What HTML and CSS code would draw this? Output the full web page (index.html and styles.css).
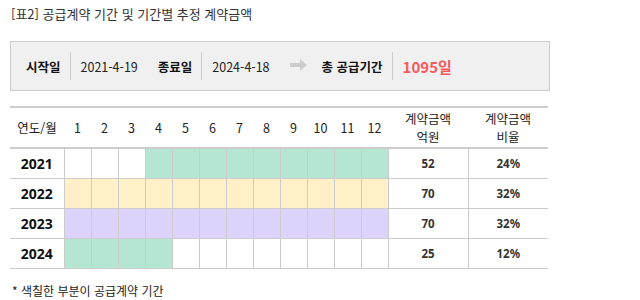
FILE: index.html
```html
<!DOCTYPE html>
<html lang="ko">
<head>
<meta charset="utf-8">
<link rel="stylesheet" href="styles.css">
</head>
<body>
<div class="page">
  <h1 class="title">[표2] 공급계약 기간 및 기간별 추정 계약금액</h1>

  <div class="summary">
    <span class="label">시작일</span><span class="sep"></span><span class="val">2021-4-19</span>
    <span class="label">종료일</span><span class="sep"></span><span class="val">2024-4-18</span>
    <svg class="arrow" width="18" height="14" viewBox="0 0 18 14"><rect x="0" y="4" width="11" height="4" fill="#cccccc"/><polygon points="10,0 17,6 10,12" fill="#cccccc"/></svg>
    <span class="label">총 공급기간</span><span class="sep"></span><span class="total">1095일</span>
  </div>

  <table class="grid">
    <thead>
      <tr>
        <th class="year-h">연도/월</th>
        <th>1</th><th>2</th><th>3</th><th>4</th><th>5</th><th>6</th>
        <th>7</th><th>8</th><th>9</th><th>10</th><th>11</th><th>12</th>
        <th class="amt">계약금액<br>억원</th>
        <th class="amt">계약금액<br>비율</th>
      </tr>
    </thead>
    <tbody>
      <tr>
        <td class="year">2021</td>
        <td></td><td></td><td></td>
        <td class="g"></td><td class="g"></td><td class="g"></td><td class="g"></td><td class="g"></td><td class="g"></td><td class="g"></td><td class="g"></td><td class="g"></td>
        <td class="num">52</td><td class="num">24%</td>
      </tr>
      <tr>
        <td class="year">2022</td>
        <td class="y"></td><td class="y"></td><td class="y"></td><td class="y"></td><td class="y"></td><td class="y"></td><td class="y"></td><td class="y"></td><td class="y"></td><td class="y"></td><td class="y"></td><td class="y"></td>
        <td class="num">70</td><td class="num">32%</td>
      </tr>
      <tr>
        <td class="year">2023</td>
        <td class="p"></td><td class="p"></td><td class="p"></td><td class="p"></td><td class="p"></td><td class="p"></td><td class="p"></td><td class="p"></td><td class="p"></td><td class="p"></td><td class="p"></td><td class="p"></td>
        <td class="num">70</td><td class="num">32%</td>
      </tr>
      <tr>
        <td class="year">2024</td>
        <td class="g"></td><td class="g"></td><td class="g"></td><td class="g"></td>
        <td></td><td></td><td></td><td></td><td></td><td></td><td></td><td></td>
        <td class="num">25</td><td class="num">12%</td>
      </tr>
    </tbody>
  </table>

  <p class="note">* 색칠한 부분이 공급계약 기간</p>
</div>
</body>
</html>
```

FILE: styles.css
```css
* { box-sizing: border-box; }
html, body { margin: 0; padding: 0; background: #fff; }
body {
  font-family: "Noto Sans CJK KR", "Noto Sans", sans-serif;
  color: #222;
}
.page {
  width: 640px;
  padding: 6px 0 0 10px;
}
.title {
  margin: 0 0 0 1px;
  font-size: 13px;
  font-weight: 400;
  line-height: 16px;
  color: #333;
}
.summary {
  margin-top: 19px;
  width: 540px;
  height: 50px;
  background: #f0f0f0;
  border: 1px solid #cccccc;
  display: flex;
  align-items: center;
  padding-left: 15px;
  font-size: 12.5px;
}
.summary .label {
  font-weight: 700;
  color: #111;
}
.summary .sep {
  width: 1px;
  height: 28px;
  background: #cccccc;
  margin: 0 10px 0 9px;
}
.summary .val {
  color: #222;
  margin-right: 20px;
}
.summary .arrow {
  margin: 0 14px 0 0;
}
.summary .total {
  color: #f65a5a;
  font-weight: 700;
  font-size: 15px;
}
.grid {
  margin-top: 15px;
  width: 538px;
  border-collapse: collapse;
  table-layout: fixed;
  font-size: 12.5px;
}
.grid thead tr {
  border-top: 2px solid #cccccc;
  border-bottom: 2px solid #cccccc;
  height: 41px;
}
.grid th {
  font-weight: 400;
  color: #222;
  width: 27px;
  padding: 0;
  line-height: 18px;
  text-align: center;
}
.grid th.year-h { width: 54px; }
.grid th.amt { width: 80px; }
.grid tbody tr {
  height: 30px;
  border-bottom: 1px solid #cccccc;
}
.grid td {
  padding: 0;
  border-left: 1px solid #cccccc;
  text-align: center;
}
.grid td.year {
  border-left: none;
  font-weight: 700;
  font-size: 14px;
  color: #111;
  font-family: "Noto Sans", sans-serif;
}
.grid td.num {
  font-family: "Noto Sans", sans-serif;
  font-weight: 700;
  font-size: 11.5px;
  color: #333;
}
.grid td.g { background: #b5e5d3; }
.grid td.y { background: #fff0c7; }
.grid td.p { background: #dcd2fb; }
.note {
  margin: 14px 0 0 2px;
  font-size: 12px;
  color: #222;
  line-height: 16px;
}
```
